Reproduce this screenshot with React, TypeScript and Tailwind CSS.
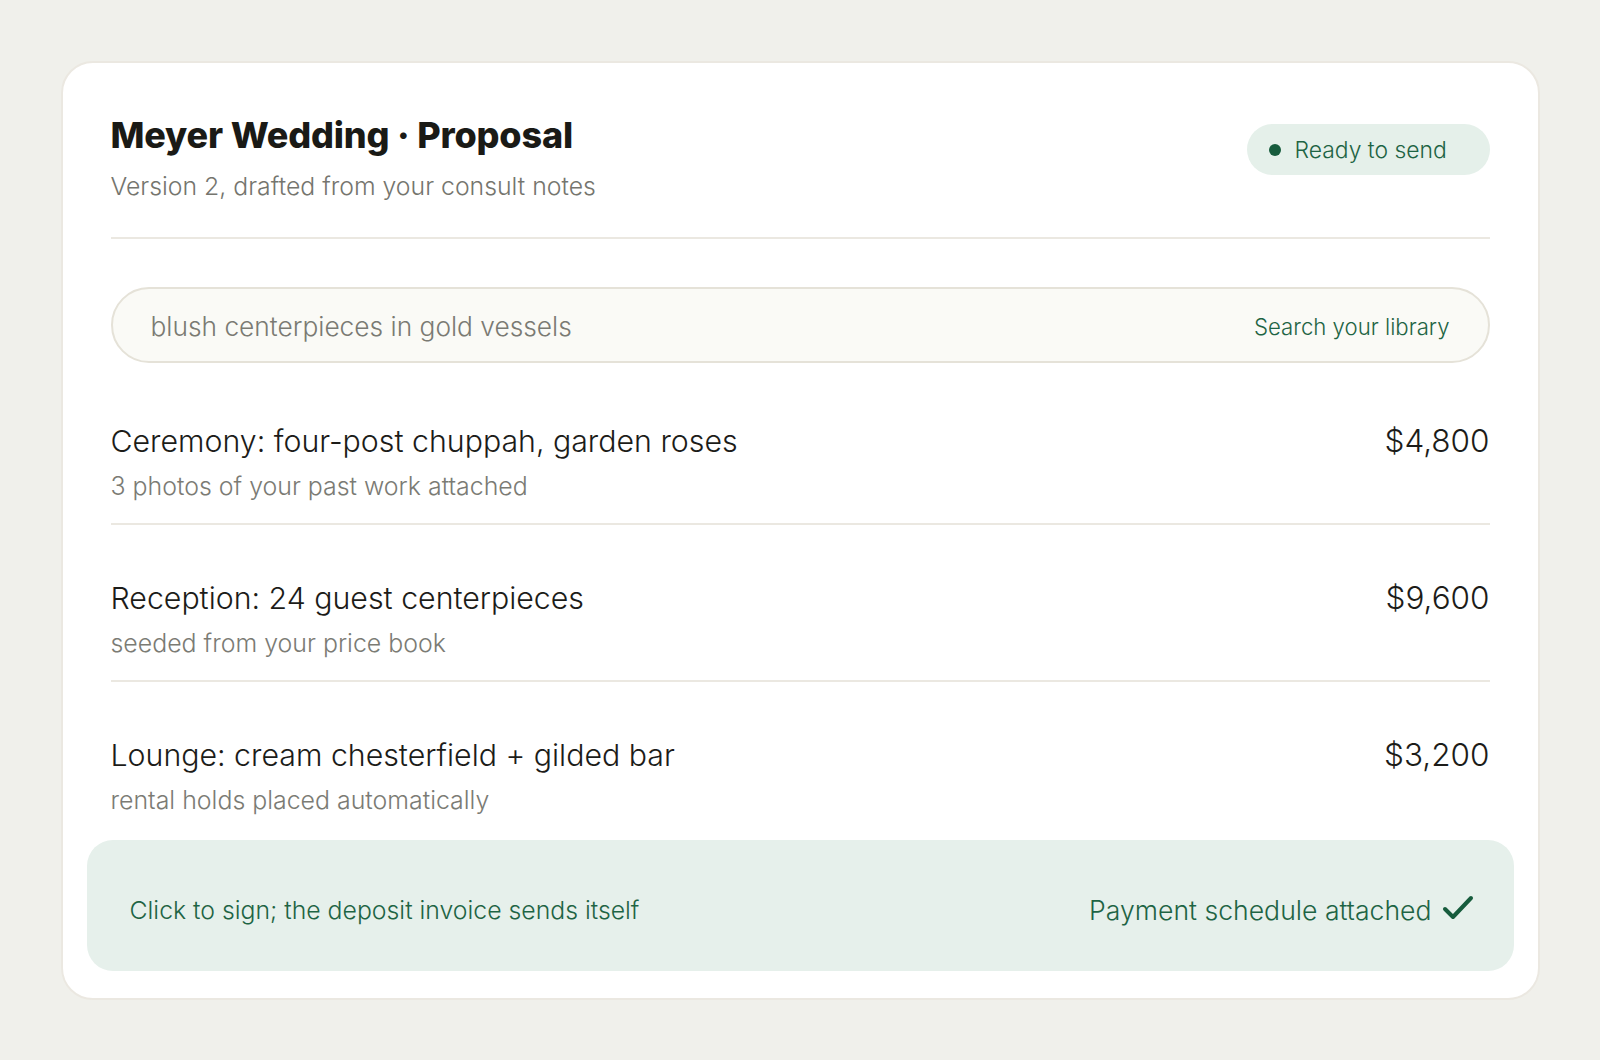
import React from "react";

type LineItem = {
  title: string;
  note: string;
  price: string;
};

const items: LineItem[] = [
  { title: "Ceremony: four-post chuppah, garden roses", note: "3 photos of your past work attached", price: "$4,800" },
  { title: "Reception: 24 guest centerpieces", note: "seeded from your price book", price: "$9,600" },
  { title: "Lounge: cream chesterfield + gilded bar", note: "rental holds placed automatically", price: "$3,200" },
];

const body = { fontFamily: "Inter, 'Noto Sans', sans-serif" };

export default function App() {
  return (
    <div className="min-h-screen bg-[#f0f0eb] pt-[61px] pb-[60px] font-light" style={body}>
      <div className="mx-auto w-[1479px] rounded-[32px] border-2 border-[#ebe8e1] bg-white px-[48px] pt-[52px] pb-[27px]">
        <header className="flex items-start justify-between pb-[36px] border-b-2 border-[#ebe8e1]">
          <div>
            <h1 className="text-[36px] leading-[40px] font-extrabold tracking-[-0.005em] text-[#1a1a16]">
              Meyer Wedding · Proposal
            </h1>
            <p className="mt-[16px] text-[24.8px] leading-[30px] text-[#75756e]">
              Version 2, drafted from your consult notes
            </p>
          </div>
          <div className="mt-[9px] flex h-[51px] w-[243px] items-center gap-[14px] rounded-full bg-[#e5f0ea] pl-[22px]">
            <span className="h-[12px] w-[12px] rounded-full bg-[#175c3d]" />
            <span className="text-[22.9px] leading-[30px] text-[#1e6444]">Ready to send</span>
          </div>
        </header>

        <div className="mt-[48px] mb-[5px] flex h-[76px] items-center justify-between rounded-full border-2 border-[#e5e2d8] bg-[#fafaf6] pt-[3px] pl-[38px] pr-[38px]">
          <span className="text-[26.3px] text-[#7a7a73]">blush centerpieces in gold vessels</span>
          <span className="text-[22.2px] text-[#1e6444]">Search your library</span>
        </div>

        <div>
          {items.map((item, i) => (
            <div
              key={item.title}
              className={
                i < items.length - 1
                  ? "flex items-start justify-between pt-[53px] pb-[22px] border-b-2 border-[#ebe8e1]"
                  : "flex items-start justify-between pt-[53px] pb-[25px]"
              }
            >
              <div>
                <div className="text-[30.3px] leading-[40px] text-[#1c1c19]">{item.title}</div>
                <div className="mt-[10px] text-[24.9px] leading-[30px] text-[#7b7b74]">{item.note}</div>
              </div>
              <div className="text-[31.5px] leading-[40px] text-[#1c1c19]">{item.price}</div>
            </div>
          ))}
        </div>

        <div className="-mx-[24px] flex h-[131px] items-center justify-between rounded-[26px] bg-[#e6f0eb] pt-[10px] pl-[43px] pr-[40px]">
          <span className="text-[24.8px] text-[#1e6444]">Click to sign; the deposit invoice sends itself</span>
          <div className="flex items-center gap-[10px]">
            <span className="text-[26.6px] text-[#1e6444]">Payment schedule attached</span>
            <svg width="32" height="28" viewBox="0 0 32 28" fill="none" className="-mt-[4px]">
              <path
                d="M3 15l8 8L29 4"
                stroke="#175c3d"
                strokeWidth="4"
                strokeLinecap="round"
                strokeLinejoin="round"
              />
            </svg>
          </div>
        </div>
      </div>
    </div>
  );
}
